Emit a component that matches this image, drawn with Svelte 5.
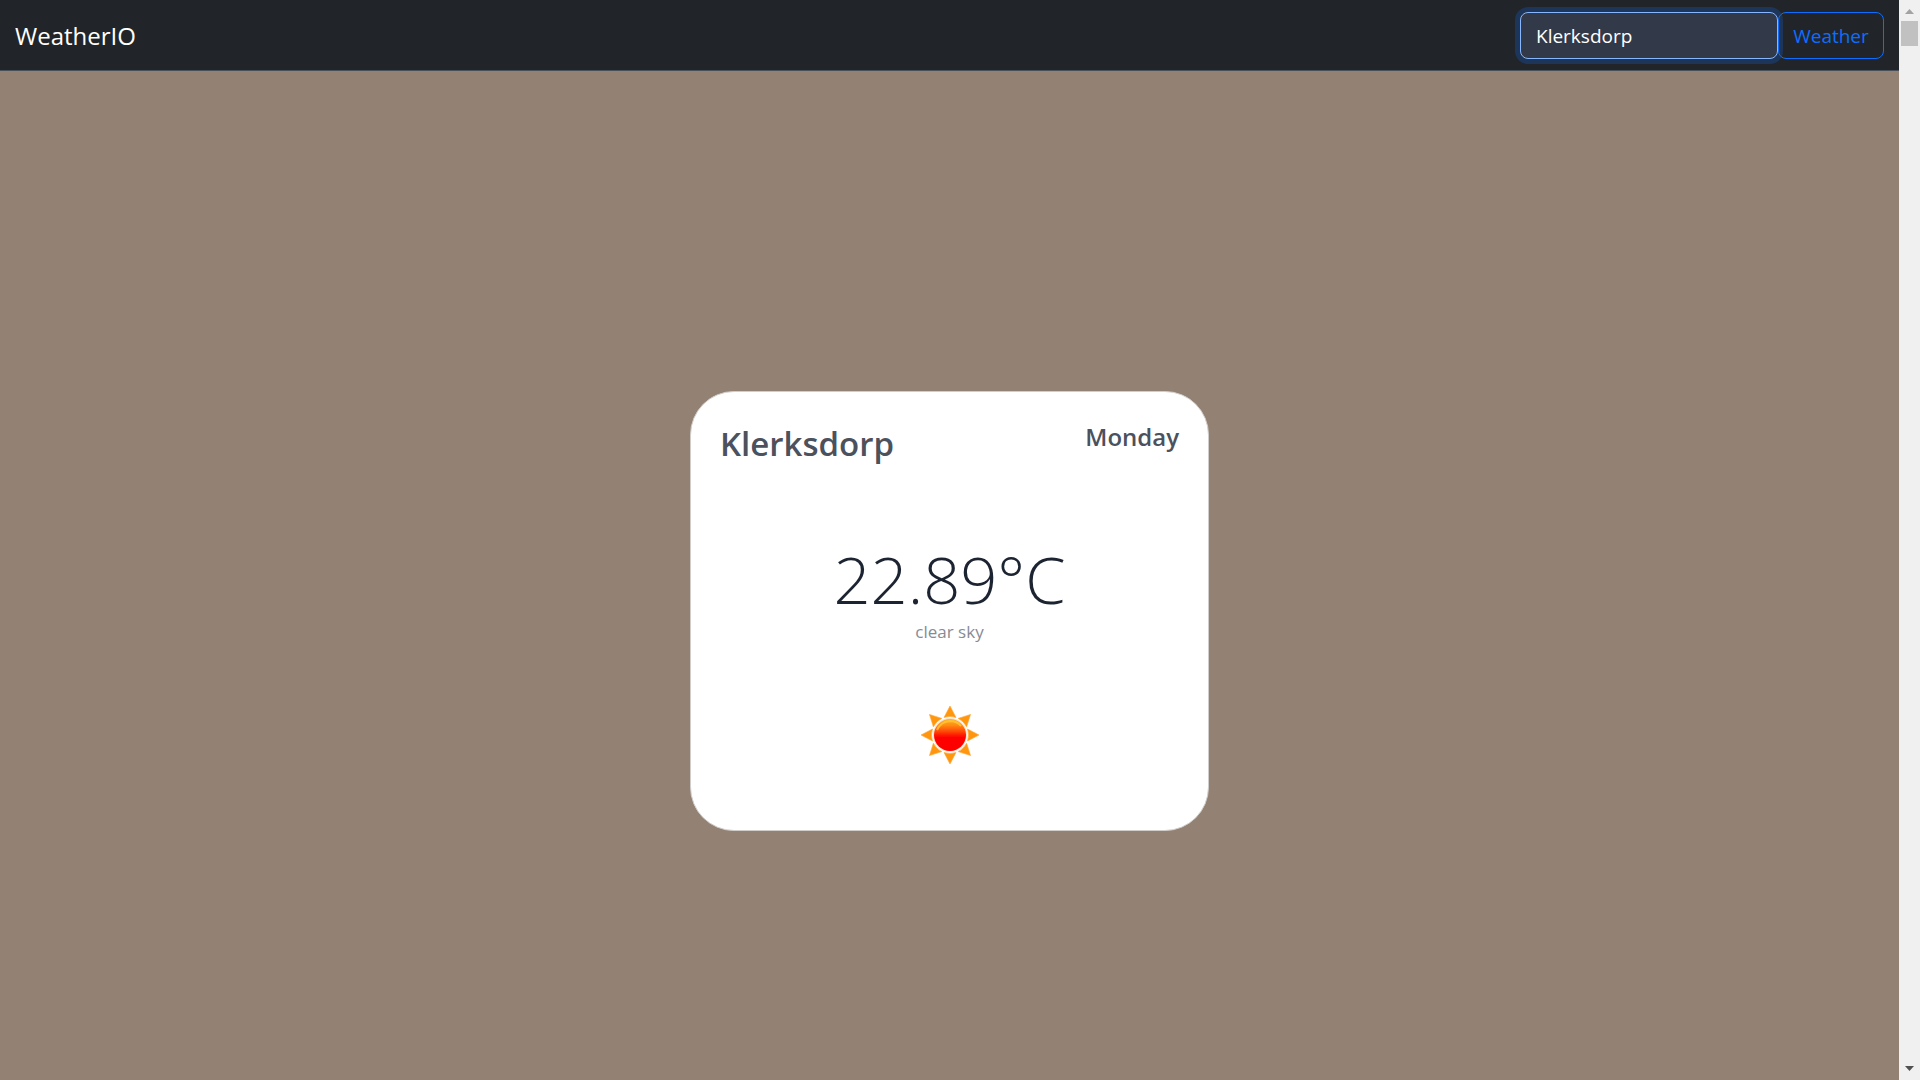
<script>
  let city = $state('Klerksdorp');
  const weather = { place: 'Klerksdorp', day: 'Monday', temperature: '22.89°C', description: 'clear sky' };
  const rays = [0, 45, 90, 135, 180, 225, 270, 315];
</script>

<div class="window">
  <div class="page">
    <nav class="navbar">
      <a class="brand" href="#home">WeatherIO</a>
      <form class="search" onsubmit={(e) => e.preventDefault()}>
        <input class="city" type="text" aria-label="City" bind:value={city} />
        <button class="submit" type="submit">Weather</button>
      </form>
    </nav>
    <main class="content">
      <section class="card">
        <header class="heading">
          <h1 class="place">{weather.place}</h1>
          <h2 class="day">{weather.day}</h2>
        </header>
        <div class="reading">
          <p class="temperature">{weather.temperature}</p>
          <p class="description">{weather.description}</p>
        </div>
        <svg class="sun" viewBox="-32 -32 64 64" role="img" aria-label="Sunny">
          <defs>
            <linearGradient id="disk" x1="0" y1="0" x2="0" y2="1">
              <stop offset="0" stop-color="#ffb428" />
              <stop offset="0.2" stop-color="#ff8a12" />
              <stop offset="0.42" stop-color="#ff3c06" />
              <stop offset="0.56" stop-color="#ff0500" />
              <stop offset="1" stop-color="#fb0000" />
            </linearGradient>
            <filter id="soften" x="-20%" y="-20%" width="140%" height="140%">
              <feGaussianBlur stdDeviation="0.7" />
            </filter>
          </defs>
          <g filter="url(#soften)">
            {#each rays as angle}
              <path
                d="M0-29 6-17.5Q0-19.5-6-17.5Z"
                fill="#ff960f"
                stroke="#ffa630"
                stroke-width="0.6"
                transform="rotate({angle})"
              />
            {/each}
            <circle r="17" fill="#ffe0c8" />
            <circle r="16" fill="url(#disk)" />
            <path d="M-13-5Q-9-13.5 0-14 7-14 11-9" fill="none" stroke="#ffc83c" stroke-width="2" opacity="0.8" />
          </g>
        </svg>
      </section>
    </main>
  </div>
  <div class="scrollbar" aria-hidden="true">
    <svg class="arrow" viewBox="0 0 21 21"><path d="M6 14h9l-4.5-5z" fill="#a3a3a3" /></svg>
    <div class="thumb"></div>
    <svg class="arrow end" viewBox="0 0 21 21"><path d="M6 7h9l-4.5 5z" fill="#505050" /></svg>
  </div>
</div>

<style>
  :global(body) {
    margin: 0;
    background: #938273;
  }
  .window {
    display: flex;
    min-height: 100vh;
    font-family: "Open Sans", "Noto Sans", sans-serif;
  }
  .window * {
    box-sizing: border-box;
  }
  .page {
    flex: 1;
    display: flex;
    flex-direction: column;
    background: #938273;
  }
  .navbar {
    display: flex;
    align-items: center;
    justify-content: space-between;
    padding: 12px 15px 11px;
    background: #212529;
    border-bottom: 1px solid #495057;
  }
  .brand {
    color: #fff;
    font-size: 24px;
    line-height: 36px;
    text-decoration: none;
  }
  .search {
    display: flex;
  }
  .city,
  .submit {
    height: 47px;
    border-radius: 8px;
    font-family: inherit;
    font-size: 19px;
    line-height: 30px;
  }
  .city {
    width: 258px;
    padding: 0 15px;
    border: 1px solid #86b7fe;
    outline: none;
    background: #323949;
    color: #fff;
    box-shadow: 0 0 0 5px #1c3559;
  }
  .submit {
    width: 106px;
    padding: 0;
    border: 1px solid #0d6efd;
    background: transparent;
    color: #0d6efd;
    z-index: 1;
  }
  .content {
    flex: 1;
    display: flex;
    align-items: center;
    justify-content: center;
    padding-top: 70px;
  }
  .card {
    display: flex;
    flex-direction: column;
    align-items: center;
    width: 519px;
    padding: 29px 29px 63px;
    border: 1px solid #d0cdca;
    border-radius: 44px;
    background: #fff;
  }
  .heading {
    align-self: stretch;
    display: flex;
    justify-content: space-between;
    align-items: flex-start;
    color: #4b515d;
  }
  h1,
  h2,
  p {
    margin: 0;
  }
  .place {
    font-size: 33px;
    font-weight: 600;
    line-height: 46px;
  }
  .day {
    font-size: 24px;
    font-weight: 600;
    line-height: 32px;
  }
  .reading {
    display: flex;
    flex-direction: column;
    align-items: center;
    margin: 72px 0 58px;
  }
  .temperature {
    color: #1c2331;
    font-size: 65px;
    font-weight: 300;
    line-height: 80px;
  }
  .description {
    color: #868b94;
    font-size: 17px;
    line-height: 26px;
  }
  .sun {
    width: 64px;
    height: 64px;
  }
  .scrollbar {
    display: flex;
    flex-direction: column;
    align-items: center;
    width: 21px;
    background: #f0f0f0;
  }
  .arrow {
    width: 21px;
    height: 21px;
  }
  .thumb {
    width: 17px;
    height: 25px;
    background: #c1c1c1;
  }
  .end {
    margin-top: auto;
  }
</style>
